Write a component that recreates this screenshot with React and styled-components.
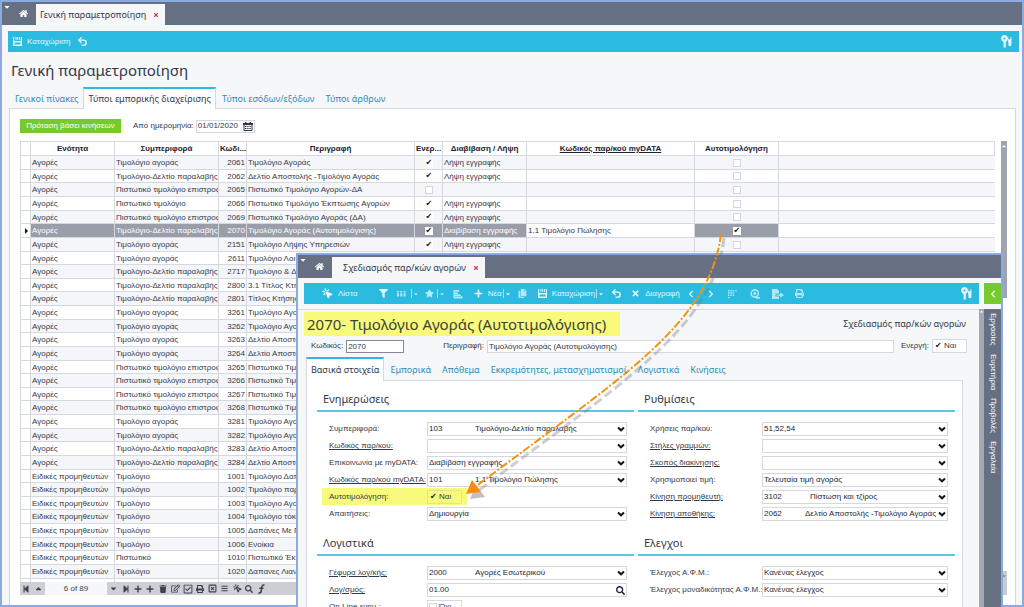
import { useState } from "react";
import styled, { createGlobalStyle, css } from "styled-components";
import { FaHome, FaFilter, FaStar, FaPlus, FaCopy, FaTimes, FaPrint, FaTrash, FaRegEdit, FaRegCheckSquare, FaSearch, FaBars, FaStepBackward, FaStepForward, FaCaretUp, FaCaretDown, FaChevronLeft, FaChevronRight } from "react-icons/fa";
import { Undo2, MousePointerClick, SquareX } from "lucide-react";

const colors = {
    frame: '#8aaae0',
    bar: '#677083',
    cyan: '#2bbbe1',
    green: '#77ca2b',
    page: '#f5f7f9',
    line: '#d5d8de',
    selected: '#9a9ea9',
    link: '#2d8db8',
    text: '#33384a',
    mark: '#f8fa7c',
}

const GlobalStyle = createGlobalStyle`
    * {
        box-sizing: border-box;
    }
    body {
        margin: 0;
        background-color: ${colors.page};
        color: ${colors.text};
        font-family: "Liberation Sans", sans-serif;
        font-size: 8px;
        line-height: 12px;
    }
    button, input, select {
        margin: 0;
        padding: 0;
        border: 0;
        border-radius: 0;
        background: none;
        color: inherit;
        font: inherit;
    }
    h1, h2, p {
        margin: 0;
        font-weight: normal;
    }
    svg {
        display: block;
        flex: none;
    }
`
const Desktop = styled.div`
    position: relative;
    height: 100vh;
    overflow: hidden;
`
const MainWindow = styled.main`
    display: flex;
    flex-direction: column;
    height: 100%;
    border: 2px solid ${colors.frame};
`
const FloatingWindow = styled.section`
    position: absolute;
    left: 296px;
    right: 21px;
    top: 253px;
    bottom: 0;
    display: flex;
    flex-direction: column;
    overflow: hidden;
    border: 2px solid ${colors.frame};
    border-bottom: 0;
    background-color: ${colors.page};
`
const TitleBar = styled.header`
    flex: none;
    display: flex;
    height: 23px;
    background-color: ${colors.bar};
    color: #fff;
`
const MenuArrow = styled.button`
    width: 9px;
    height: 9px;
    display: flex;
    align-items: center;
    justify-content: center;
`
const HomeButton = styled.button`
    width: 25px;
    display: flex;
    align-items: center;
    justify-content: center;
`
const WindowTab = styled.div`
    display: flex;
    align-items: center;
    gap: 7px;
    margin-top: 2px;
    padding: 0 6px 0 ${props => props.$indent}px;
    background-color: ${colors.page};
    color: ${colors.text};
    font-family: "Noto Sans", sans-serif;
    font-size: 9px;
`
const CloseButton = styled.button`
    color: #e0293b;
`
const Toolbar = styled.div`
    flex: ${props => props.$fill ? 1 : 'none'};
    display: flex;
    align-items: center;
    gap: 3px;
    height: 21px;
    margin: ${props => props.$margin || 0};
    padding: 0 7px 0 ${props => props.$indent}px;
    background-color: ${colors.cyan};
    color: #fff;
`
const ToolButton = styled.button`
    display: flex;
    align-items: center;
    gap: ${props => props.$gap || 5}px;
    margin-left: ${props => props.$space || 0}px;
    color: #e4f7fc;
    white-space: nowrap;
    svg {
        opacity: ${props => props.$faint ? 0.75 : 1};
    }
    &:last-child {
        margin-left: auto;
    }
`
const Split = styled.span`
    display: flex;
    align-items: center;
    gap: 1px;
    height: 9px;
    margin-left: ${props => props.$tight ? -4 : 0}px;
    padding-left: 1px;
    border-left: 1px solid #a5e1f2;
`
const PageTitle = styled.h1`
    flex: none;
    margin: 8px 0 7px 9px;
    font-family: "Noto Sans", sans-serif;
    font-size: 15px;
    line-height: 20px;
`
const TabList = styled.nav`
    position: relative;
    z-index: 1;
    flex: none;
    display: flex;
    align-items: stretch;
    margin-bottom: -1px;
    margin-left: ${props => props.$indent}px;
`
const Tab = styled.button`
    height: ${props => props.$tall ? 24 : 22}px;
    padding: 0 5px 0 6px;
    border-top: 2px solid transparent;
    color: ${colors.link};
    font-family: "Noto Sans", sans-serif;
    font-size: 9px;
    white-space: nowrap;
    ${props => props.$active && css`
        padding: 0 4px;
        border-top-color: ${colors.cyan};
        border-left: 1px solid ${colors.line};
        border-right: 1px solid ${colors.line};
        background-color: #fff;
        color: ${colors.text};
    `}
`
const Panel = styled.div`
    flex: 1;
    min-height: 0;
    display: flex;
    flex-direction: column;
    margin: 0 6px 0 7px;
    padding: 10px 8px 10px 10px;
    border: 1px solid ${colors.line};
    border-bottom: 0;
    background-color: #fff;
`
const FilterBar = styled.div`
    flex: none;
    display: flex;
    align-items: center;
    height: 14px;
    margin-bottom: 8px;
    label {
        margin: 0 2px 0 12px;
    }
`
const GreenButton = styled.button`
    width: 101px;
    height: 14px;
    background-color: ${colors.green};
    color: #fff;
`
const DateField = styled.div`
    display: flex;
    align-items: center;
    width: 59px;
    height: 13px;
    padding: 0 1px;
    border: 1px solid ${colors.line};
    input {
        flex: 1;
        min-width: 0;
    }
`
const GridArea = styled.div`
    flex: 1;
    min-height: 0;
    display: flex;
    gap: 6px;
`
const GridColumn = styled.div`
    flex: 1;
    min-width: 0;
    display: flex;
    flex-direction: column;
`
const GridClip = styled.div`
    flex: 1;
    min-height: 0;
    overflow: hidden;
    border-top: 1px solid ${colors.line};
    border-left: 1px solid ${colors.line};
`
const Grid = styled.table`
    width: 100%;
    table-layout: fixed;
    border-collapse: separate;
    border-spacing: 0;
    th, td {
        height: 14px;
        padding: 0 1px;
        border-right: 1px solid ${colors.line};
        border-bottom: 1px solid ${colors.line};
        overflow: hidden;
        white-space: nowrap;
        text-align: left;
        line-height: 12px;
    }
    th {
        color: #1d2130;
        text-align: center;
    }
    td:last-child {
        border-right: 0;
    }
    tbody tr:nth-child(8n + 2) td,
    tbody tr:nth-child(8n + 5) td,
    tbody tr:nth-child(8n + 8) td {
        height: 13px;
        line-height: 11px;
    }
    tbody tr:nth-child(odd) td:not(:first-child) {
        background-color: #f4f6f9;
    }
`
const Row = styled.tr`
    ${props => props.$selected && css`
        td:nth-child(n + 2):nth-child(-n + 7),
        td:nth-child(9) {
            background-color: ${colors.selected};
            color: #fff;
        }
        td:first-child {
            padding-left: 4px;
        }
    `}
`
const NumberCell = styled.td`
    && {
        text-align: right;
    }
`
const CheckCell = styled.td`
    && {
        text-align: center;
    }
`
const Check = styled.input`
    appearance: none;
    display: block;
    flex: none;
    width: 8px;
    height: 8px;
    margin: 0 auto;
    border: 1px solid ${props => props.$bare ? 'transparent' : '#d3d6dc'};
    background-color: ${props => props.$bare ? 'transparent' : '#fff'};
    &:checked {
        border-color: transparent;
    }
    &:checked::after {
        content: "✔";
        display: block;
        margin: -2px 0 0;
        color: #15171e;
        font-family: "DejaVu Sans", sans-serif;
        font-size: 8px;
        line-height: 10px;
    }
`
const ScrollTrack = styled.div`
    width: ${props => props.$width}px;
    display: flex;
    flex-direction: column;
    justify-content: space-between;
    background-color: ${props => props.$filled ? '#a5a9b4' : 'transparent'};
    color: #fff;
`
const ScrollThumb = styled.div`
    height: ${props => props.$height}px;
    padding-top: 2px;
    background-color: ${props => props.$light ? '#c9cbd0' : '#a0a4ae'};
    color: ${props => props.$light ? '#888c96' : '#fff'};
`
const Navigator = styled.div`
    flex: none;
    display: flex;
    align-items: center;
    height: 13px;
    background-color: #cdcfd4;
    color: #3b4254;
`
const NavButtons = styled.div`
    display: flex;
    width: ${props => props.$width}px;
    button {
        flex: 1;
        display: flex;
        align-items: center;
        justify-content: center;
    }
`
const Position = styled.p`
    width: 62px;
    background-color: #f5f7f9;
    line-height: 13px;
    text-align: center;
`
const ToolRow = styled.div`
    flex: none;
    display: flex;
    gap: 5px;
    margin: 5px 0 5px 6px;
`
const ExpandButton = styled.button`
    width: 17px;
    height: 21px;
    display: flex;
    align-items: center;
    justify-content: center;
    background-color: ${colors.green};
    color: #fff;
`
const WindowBody = styled.div`
    flex: 1;
    min-height: 0;
    display: flex;
`
const Form = styled.form`
    flex: 1;
    min-width: 0;
    display: flex;
    flex-direction: column;
    border-top: 1px solid ${colors.line};
`
const FormHeader = styled.div`
    flex: none;
    display: flex;
    align-items: center;
    justify-content: space-between;
    margin: 2px 13px 3px 6px;
    font-family: "Noto Sans", sans-serif;
    font-size: 9px;
`
const MarkedTitle = styled.h1`
    padding: 0 14px 0 3px;
    background-color: ${colors.mark};
    color: #3e4238;
    font-size: 15px;
    line-height: 24px;
`
const KeyRow = styled.div`
    flex: none;
    display: flex;
    align-items: center;
    gap: 3px;
    margin: 0 12px 4px 13px;
`
const KeyLabel = styled.label`
    flex: none;
    margin-left: ${props => props.$space || 0}px;
`
const TextInput = styled.input`
    flex: ${props => props.$short ? '0 0 58px' : 1};
    min-width: 0;
    height: 13px;
    padding: 0 1px;
    border: 1px solid ${props => props.$short ? '#858995' : colors.line};
    background-color: #fff;
`
const CheckField = styled.label`
    flex: none;
    display: flex;
    align-items: center;
    gap: 2px;
    width: 35px;
    height: 14px;
    padding-left: 1px;
    border: 1px solid ${props => props.$marked ? '#e2e58a' : colors.line};
    background-color: ${props => props.$marked ? 'transparent' : '#fff'};
    input {
        margin: 0;
    }
`
const FormPanel = styled.div`
    flex: 1;
    min-height: 0;
    display: grid;
    grid-template-columns: repeat(2, minmax(0, 1fr));
    align-content: start;
    gap: 12px 4px;
    margin: 0 16px 0 8px;
    padding: 8px 7px 0 10px;
    border: 1px solid ${colors.line};
    border-bottom: 0;
    background-color: #fff;
`
const SectionTitle = styled.h2`
    height: 23px;
    padding-left: 6px;
    border-bottom: 2px solid #62c4e2;
    font-family: "Noto Sans", sans-serif;
    font-size: 11px;
    line-height: 20px;
`
const Fields = styled.div`
    display: flex;
    flex-direction: column;
    gap: 3px;
    padding: 10px 7px 0 0;
`
const FieldRow = styled.div`
    display: flex;
    align-items: center;
    ${props => props.$marked && css`
        align-self: flex-start;
        width: 145px;
        margin: -2px 0 -1px 5px;
        padding: 2px 0 1px;
        background-color: ${colors.mark};
    `}
`
const FieldLabel = styled.label`
    flex: none;
    width: ${props => props.$width}px;
    padding-left: 12px;
    margin-left: ${props => props.$marked ? -5 : 0}px;
    white-space: nowrap;
    text-decoration: ${props => props.$link ? 'underline' : 'none'};
`
const Combo = styled.div`
    position: relative;
    flex: 1;
    min-width: 0;
    display: flex;
    height: 14px;
    border: 1px solid ${colors.line};
    background-color: #fff;
    color: #23283a;
    input {
        width: ${props => props.$code ? 46 : 180}px;
        min-width: 0;
        padding-left: 1px;
    }
    select {
        flex: 1 0 auto;
        min-width: 0;
        padding: 0 10px 0 1px;
        appearance: none;
    }
    svg {
        position: absolute;
        right: 1px;
        top: 2px;
        pointer-events: none;
    }
`
const SideBar = styled.nav`
    width: 17px;
    display: flex;
    flex-direction: column;
    align-items: center;
    gap: 8px;
    padding-top: 4px;
    background-color: ${colors.bar};
`
const SideLink = styled.button`
    color: #fff;
    writing-mode: vertical-rl;
`
const Arrow = styled.svg`
    position: absolute;
    left: 0;
    top: 0;
    pointer-events: none;
`

const SaveIcon = () => (
    <svg width="9" height="9" viewBox="0 0 9 9" fill="currentColor">
        <path d="M0 0h1.200v4h6.600V0H9v9H0zM1.500 5.500v2h6v-2zM2.500 0h1v2.800h-1zM4.200 0h1v2.800h-1zM6 0h1v2.800H6z" fillRule="evenodd" />
    </svg>
)
const ToolsIcon = () => (
    <svg width="11" height="13" viewBox="0 0 11 13">
        <circle cx="3.500" cy="3.500" r="2.200" fill="none" stroke="currentColor" strokeWidth="2.400" />
        <path d="M2.600 6h2.200v6.500H2.600z" fill="currentColor" />
        <path d="M7.300 1.500v2.500l1 .6L9.500 4V1.500c1.100.9 1.300 2.900.9 3.900v4.400a1.500 1.500 0 0 1-3 0V7C6.600 6 6.400 2.600 7.300 1.500z" fill="currentColor" />
    </svg>
)
const CalendarIcon = () => (
    <svg width="10" height="9" viewBox="0 0 10 9">
        <path d="M1 2.500h8v6H1z" fill="none" stroke="#33384a" />
        <path d="M0 1h10v2H0zM2 0h1.500v2H2zM6.500 0H8v2H6.500z" fill="#33384a" />
        <path d="M2 4.500h6M2 6.500h6" stroke="#33384a" strokeDasharray="1.400 0.800" />
    </svg>
)
const ColumnsIcon = () => (
    <svg width="9" height="8" viewBox="0 0 9 8" fill="currentColor">
        <path d="M0 1h2v1.500H0zM3.300 1h2v1.500h-2zM6.600 1h2v1.500h-2zM0 3.200h2v3.300H0zM3.300 3.200h2v3.300h-2zM6.600 3.200h2v3.300h-2z" />
    </svg>
)
const ReportIcon = () => (
    <svg width="10" height="10" viewBox="0 0 10 10" fill="currentColor">
        <path d="M1 1h5v1.800H1zM1 3.400h4v1.600H1zM1 5.600h6v1.600H1zM1 7.800h8.500V9.600H1z" />
        <path d="M1 1v8M6.500 5.500L9 8" stroke="currentColor" />
    </svg>
)
const DotsIcon = () => (
    <svg width="9" height="10" viewBox="0 0 9 10" fill="currentColor">
        <path d="M0 1h1.500v1.500H0zM2.300 1h1.500v1.500H2.300zM4.600 1h1.500v1.500H4.600zM7.200 1h1.500v1.500H7.200zM0 3.300h1.500v1.500H0zM2.300 3.300h1.500v1.500H2.300zM4.600 3.300h1.500v1.500H4.600zM0 5.600h1.500v1.500H0zM2.300 5.600h1.500v1.500H2.300zM4.600 5.600h1.500v1.500H4.600zM0 8h1.500v1.300H0z" />
    </svg>
)
const LookupIcon = () => (
    <svg width="10" height="10" viewBox="0 0 10 10" fill="none" stroke="currentColor">
        <circle cx="4.800" cy="4.500" r="3.600" strokeWidth="1.600" />
        <circle cx="4.800" cy="4.500" r="0.800" strokeWidth="1.400" />
        <path d="M5.500 8.800H10" strokeWidth="1.600" />
    </svg>
)
const ExportIcon = () => (
    <svg width="12" height="10" viewBox="0 0 12 10" fill="currentColor">
        <path d="M0 0h5l2 2v2.500H3.500v3H7V10H0z" />
        <path d="M4.500 5.400h3.800V3.500L12 6.100 8.300 8.600V6.700H4.500z" />
    </svg>
)
const Chevron = () => (
    <svg width="8" height="8" viewBox="0 0 8 8" fill="none" stroke="#15171e" strokeWidth="2">
        <path d="M1 2.500L4 5.300l3-2.800" />
    </svg>
)
const FunctionIcon = () => (
    <svg width="9" height="10" viewBox="0 0 9 10" fill="none" stroke="currentColor" strokeWidth="1.600">
        <path d="M7.500 1.200C5.500.6 5 2 4.700 4L4.200 7C3.900 8.800 3 9.300 1.500 8.800M2.300 4.200h4.200" />
    </svg>
)
const RowMarker = () => (
    <svg width="3" height="6" viewBox="0 0 3 6"><path d="M0 0l3 3-3 3z" fill="#15171e" /></svg>
)

const P = 'Αγορές'
const E = 'Ειδικές προμηθευτών'
const TA = 'Τιμολόγιο αγοράς'
const TD = 'Τιμολόγιο-Δελτίο παραλαβής'
const PE = 'Πιστωτικό τιμολόγιο επιστροφής'
const L = 'Λήψη εγγραφής'
const rows = [
    [P, TA, 2061, 'Τιμολόγιο Αγοράς', true, L],
    [P, TD, 2062, 'Δελτίο Αποστολής -Τιμολόγιο Αγοράς', true, L],
    [P, PE, 2065, 'Πιστωτικό Τιμολόγιο Αγορών-ΔΑ', false, ''],
    [P, 'Πιστωτικό τιμολόγιο', 2066, 'Πιστωτικό Τιμολόγιο Έκπτωσης Αγορών', true, L],
    [P, PE, 2069, 'Πιστωτικό Τιμολόγιο Αγοράς (ΔΑ)', true, L],
    [P, TD, 2070, 'Τιμολόγιο Αγοράς (Αυτοτιμολόγισης)', true, 'Διαβίβαση εγγραφής', '1.1 Τιμολόγιο Πώλησης', true],
    [P, TA, 2151, 'Τιμολόγιο Λήψης Υπηρεσιών', true, L],
    [P, TA, 2611, 'Τιμολόγιο Λοιπών'],
    [P, TD, 2717, 'Τιμολόγιο & Δελτίο'],
    [P, TD, 2800, '3.1 Τίτλος Κτήσης'],
    [P, TD, 2801, 'Τίτλος Κτήσης'],
    [P, TA, 3261, 'Τιμολόγιο Αγοράς'],
    [P, TA, 3262, 'Τιμολόγιο Αγοράς'],
    [P, TA, 3263, 'Δελτίο Αποστολής'],
    [P, TA, 3264, 'Δελτίο Αποστολής'],
    [P, PE, 3265, 'Πιστωτικό Τιμολόγιο'],
    [P, PE, 3266, 'Πιστωτικό Τιμολόγιο'],
    [P, PE, 3267, 'Πιστωτικό Τιμολόγιο'],
    [P, PE, 3268, 'Πιστωτικό Τιμολόγιο'],
    [P, TA, 3281, 'Τιμολόγιο Αγοράς'],
    [P, TA, 3282, 'Τιμολόγιο Αγοράς'],
    [P, TD, 3283, 'Δελτίο Αποστολής'],
    [P, TD, 3284, 'Δελτίο Αποστολής'],
    [E, 'Τιμολόγιο', 1001, 'Τιμολόγιο Δαπανών'],
    [E, 'Τιμολόγιο', 1002, 'Τιμολόγιο παροχής'],
    [E, 'Τιμολόγιο', 1003, 'Τιμολόγιο Αγοράς'],
    [E, 'Τιμολόγιο', 1004, 'Τιμολόγιο τόκων'],
    [E, 'Τιμολόγιο', 1005, 'Δαπάνες Με Παρακράτηση'],
    [E, 'Τιμολόγιο', 1006, 'Ενοίκια'],
    [E, 'Πιστωτικό', 1010, 'Πιστωτικό Έκπτωσης'],
    [E, 'Τιμολόγιο', 1020, 'Δαπανες Λιανικής'],
    [E, 'Τιμολόγιο', 1021, 'Τιμολόγιο'],
]

const updates = [
    { id: 'behaviour', label: 'Συμπεριφορά:', code: '103', value: TD },
    { id: 'docCode', label: 'Κωδικός παρ/κού:', value: '', link: true },
    { id: 'mydata', label: 'Επικοινωνία με myDATA:', value: 'Διαβίβαση εγγραφής' },
    { id: 'mydataCode', label: 'Κωδικός παρ/κού myDATA:', code: '101', value: '1.1 Τιμολόγιο Πώλησης', link: true },
    { id: 'self', label: 'Αυτοτιμολόγηση:', check: 'Ναι', checked: true, marked: true },
    { id: 'requests', label: 'Απαιτήσεις:', value: 'Δημιουργία' },
]
const settings = [
    { id: 'uses', label: 'Χρήσεις παρ/κού:', value: '51,52,54' },
    { id: 'columns', label: 'Στήλες γραμμών:', value: '', link: true },
    { id: 'purpose', label: 'Σκοπός διακίνησης:', value: '', link: true },
    { id: 'price', label: 'Χρησιμοποιεί τιμή:', value: 'Τελευταία τιμή αγοράς' },
    { id: 'supplier', label: 'Κίνηση προμηθευτή:', code: '3102', value: 'Πίστωση και τζίρος', link: true },
    { id: 'stock', label: 'Κίνηση αποθήκης:', code: '2062', value: 'Δελτίο Αποστολής -Τιμολόγιο Αγοράς', link: true },
]
const accounting = [
    { id: 'bridge', label: 'Γέφυρα λογ/κής:', code: '2000', value: 'Αγορές Εσωτερικού', link: true },
    { id: 'account', label: 'Λογ/σμός:', search: '01.00', link: true },
    { id: 'online', label: 'On-Line ενημ.:', check: 'Όχι' },
]
const checks = [
    { id: 'afm', label: 'Έλεγχος Α.Φ.Μ.:', value: 'Κανένας έλεγχος' },
    { id: 'afmUnique', label: 'Έλεγχος μοναδικότητας Α.Φ.Μ.:', value: 'Κανένας έλεγχος' },
]

function Field ({ field, labelWidth }) {
    const { id, label, code, value, search, check, checked, link, marked } = field

    return (
        <FieldRow $marked={marked}>
            <FieldLabel htmlFor={id} $width={labelWidth} $link={link} $marked={marked}>{label}</FieldLabel>
            {check && (
                <CheckField $marked={marked}>
                    <Check id={id} type="checkbox" defaultChecked={checked} $bare={marked} />
                    {check}
                </CheckField>
            )}
            {search && (
                <Combo>
                    <input id={id} defaultValue={search} />
                    <FaSearch size={9} />
                </Combo>
            )}
            {value !== undefined && (
                <Combo $code={code}>
                    {code && <input aria-label={label} defaultValue={code} />}
                    <select id={id}><option>{value}</option></select>
                    <Chevron />
                </Combo>
            )}
        </FieldRow>
    )
}

function Section ({ title, fields, labelWidth }) {
    return (
        <section>
            <SectionTitle>{title}</SectionTitle>
            <Fields>
                {fields.map(field => <Field key={field.id} field={field} labelWidth={labelWidth} />)}
            </Fields>
        </section>
    )
}

function WindowTitle ({ title, indent }) {
    return (
        <TitleBar>
            <MenuArrow aria-label="Μενού"><FaCaretDown size={8} /></MenuArrow>
            <HomeButton aria-label="Αρχική"><FaHome size={9} /></HomeButton>
            <WindowTab $indent={indent}>
                {title}
                <CloseButton aria-label="Κλείσιμο"><FaTimes size={6} /></CloseButton>
            </WindowTab>
        </TitleBar>
    )
}

function Tabs ({ items, active, onSelect, indent, tall }) {
    return (
        <TabList $indent={indent}>
            {items.map(item => (
                <Tab key={item} type="button" $tall={tall} $active={item === active} onClick={() => onSelect(item)}>{item}</Tab>
            ))}
        </TabList>
    )
}

function DocTypesGrid () {
    return (
        <Grid>
            <colgroup>
                <col width="10" /><col width="84" /><col width="104" /><col width="28" /><col width="168" />
                <col width="28" /><col width="84" /><col width="168" /><col width="84" /><col />
            </colgroup>
            <thead>
                <tr>
                    <th></th><th>Ενότητα</th><th>Συμπεριφορά</th><th>Κωδι...</th><th>Περιγραφή</th>
                    <th>Ενερ...</th><th>Διαβίβαση / Λήψη</th><th><u>Κωδικός παρ/κού myDATA</u></th><th>Αυτοτιμολόγηση</th><th></th>
                </tr>
            </thead>
            <tbody>
                {rows.map(([unit, kind, code, name, enabled, transfer, mydata, self]) => (
                    <Row key={code} $selected={code === 2070}>
                        <td>{code === 2070 && <RowMarker />}</td>
                        <td>{unit}</td>
                        <td>{kind}</td>
                        <NumberCell>{code}</NumberCell>
                        <td>{name}</td>
                        <CheckCell><Check type="checkbox" aria-label="Ενεργή" defaultChecked={enabled} /></CheckCell>
                        <td>{transfer}</td>
                        <td>{mydata}</td>
                        <CheckCell><Check type="checkbox" aria-label="Αυτοτιμολόγηση" defaultChecked={self} /></CheckCell>
                        <td></td>
                    </Row>
                ))}
            </tbody>
        </Grid>
    )
}

function GridNavigator () {
    return (
        <Navigator>
            <NavButtons $width={25}>
                <button aria-label="Πρώτη"><FaStepBackward size={8} /></button>
                <button aria-label="Προηγούμενη"><FaCaretUp size={9} /></button>
            </NavButtons>
            <Position>6 of 89</Position>
            <NavButtons $width={161}>
                <button aria-label="Επόμενη"><FaCaretDown size={9} /></button>
                <button aria-label="Τελευταία"><FaStepForward size={8} /></button>
                <button aria-label="Εισαγωγή"><FaPlus size={8} /></button>
                <button aria-label="Προσθήκη"><FaPlus size={8} /></button>
                <button aria-label="Διαγραφή"><FaTrash size={8} /></button>
                <button aria-label="Επεξεργασία"><FaRegEdit size={9} /></button>
                <button aria-label="Επιλογή"><FaRegCheckSquare size={10} /></button>
                <button aria-label="Εκτύπωση"><FaPrint size={8} /></button>
                <button aria-label="Εξαγωγή"><SquareX size={9} strokeWidth={3} /></button>
                <button aria-label="Λίστα"><FaBars size={7} /></button>
                <button aria-label="Δείκτης"><MousePointerClick size={9} strokeWidth={3} /></button>
                <button aria-label="Αναζήτηση"><FaSearch size={8} /></button>
                <button aria-label="Συνάρτηση"><FunctionIcon /></button>
            </NavButtons>
        </Navigator>
    )
}

function DesignWindow () {
    const [tab, setTab] = useState('Βασικά στοιχεία')

    return (
        <FloatingWindow>
            <WindowTitle title="Σχεδιασμός παρ/κών αγορών" indent={11} />
            <ToolRow>
                <Toolbar $fill $indent={18}>
                    <ToolButton><MousePointerClick size={11} strokeWidth={3} fill="currentColor" />Λίστα</ToolButton>
                    <ToolButton $space={18} aria-label="Φίλτρο"><FaFilter size={9} /></ToolButton>
                    <ToolButton $faint $space={6} aria-label="Στήλες"><ColumnsIcon /><Split><FaCaretDown size={6} /></Split></ToolButton>
                    <ToolButton $faint $space={3} $gap={3} aria-label="Αγαπημένα"><FaStar size={9} /><Split><FaCaretDown size={6} /></Split></ToolButton>
                    <ToolButton $faint $space={5} aria-label="Αναφορά"><ReportIcon /></ToolButton>
                    <ToolButton $space={8}><FaPlus size={9} />Νέα<Split $tight><FaCaretDown size={6} /></Split></ToolButton>
                    <ToolButton $faint $space={4} aria-label="Αντιγραφή"><FaCopy size={9} /></ToolButton>
                    <ToolButton $space={8}><SaveIcon />Καταχώριση<Split $tight><FaCaretDown size={6} /></Split></ToolButton>
                    <ToolButton $space={4} aria-label="Αναίρεση"><Undo2 size={11} strokeWidth={3} /></ToolButton>
                    <ToolButton $space={6}><FaTimes size={9} />Διαγραφή</ToolButton>
                    <ToolButton $space={4} aria-label="Προηγούμενο"><FaChevronLeft size={8} /></ToolButton>
                    <ToolButton $space={9} aria-label="Επόμενο"><FaChevronRight size={8} /></ToolButton>
                    <ToolButton $faint $space={10} aria-label="Προβολή"><DotsIcon /></ToolButton>
                    <ToolButton $faint $space={10} aria-label="Εύρεση"><LookupIcon /></ToolButton>
                    <ToolButton $faint $space={9} aria-label="Εξαγωγή"><ExportIcon /></ToolButton>
                    <ToolButton $faint $space={8} aria-label="Εκτύπωση"><FaPrint size={9} /></ToolButton>
                    <ToolButton aria-label="Ρυθμίσεις"><ToolsIcon /></ToolButton>
                </Toolbar>
                <ExpandButton aria-label="Ανάπτυξη"><FaChevronLeft size={8} /></ExpandButton>
            </ToolRow>
            <WindowBody>
                <Form>
                    <FormHeader>
                        <MarkedTitle>2070- Τιμολόγιο Αγοράς (Αυτοτιμολόγισης)</MarkedTitle>
                        <p>Σχεδιασμός παρ/κών αγορών</p>
                    </FormHeader>
                    <KeyRow>
                        <KeyLabel htmlFor="code">Κωδικός:</KeyLabel>
                        <TextInput id="code" $short defaultValue="2070" />
                        <KeyLabel htmlFor="description" $space={36}>Περιγραφή:</KeyLabel>
                        <TextInput id="description" defaultValue="Τιμολόγιο Αγοράς (Αυτοτιμολόγισης)" />
                        <KeyLabel htmlFor="active" $space={4}>Ενεργή:</KeyLabel>
                        <CheckField><Check id="active" type="checkbox" defaultChecked />Ναι</CheckField>
                    </KeyRow>
                    <Tabs
                        items={['Βασικά στοιχεία', 'Εμπορικά', 'Απόθεμα', 'Εκκρεμότητες, μετασχηματισμοί', 'Λογιστικά', 'Κινήσεις']}
                        active={tab}
                        onSelect={setTab}
                        indent={8}
                        tall
                    />
                    <FormPanel>
                        <Section title="Ενημερώσεις" fields={updates} labelWidth={110} />
                        <Section title="Ρυθμίσεις" fields={settings} labelWidth={124} />
                        <Section title="Λογιστικά" fields={accounting} labelWidth={110} />
                        <Section title="Ελεγχοι" fields={checks} labelWidth={124} />
                    </FormPanel>
                </Form>
                <ScrollTrack $width={5} $filled><FaCaretUp size={5} /></ScrollTrack>
                <SideBar>
                    <SideLink>Εργασίες</SideLink>
                    <SideLink>Ευρετήρια</SideLink>
                    <SideLink>Προβολές</SideLink>
                    <SideLink>Εργαλεία</SideLink>
                </SideBar>
            </WindowBody>
        </FloatingWindow>
    )
}

function App () {
    const [tab, setTab] = useState('Τύποι εμπορικής διαχείρισης')

    return (
        <Desktop>
            <GlobalStyle />
            <MainWindow>
                <WindowTitle title="Γενική παραμετροποίηση" indent={4} />
                <Toolbar $indent={5} $margin="6px 3px 0 6px">
                    <ToolButton><SaveIcon />Καταχώριση</ToolButton>
                    <ToolButton $space={4} aria-label="Αναίρεση"><Undo2 size={11} strokeWidth={3} /></ToolButton>
                    <ToolButton aria-label="Ρυθμίσεις"><ToolsIcon /></ToolButton>
                </Toolbar>
                <PageTitle>Γενική παραμετροποίηση</PageTitle>
                <Tabs
                    items={['Γενικοί πίνακες', 'Τύποι εμπορικής διαχείρισης', 'Τύποι εσόδων/εξόδων', 'Τύποι άρθρων']}
                    active={tab}
                    onSelect={setTab}
                    indent={7}
                />
                <Panel>
                    <FilterBar>
                        <GreenButton>Πρόταση βάσει κινήσεων</GreenButton>
                        <label htmlFor="fromDate">Από ημερομηνία:</label>
                        <DateField>
                            <input id="fromDate" defaultValue="01/01/2020" />
                            <CalendarIcon />
                        </DateField>
                    </FilterBar>
                    <GridArea>
                        <GridColumn>
                            <GridClip><DocTypesGrid /></GridClip>
                            <GridNavigator />
                        </GridColumn>
                        <ScrollTrack $width={6}>
                            <ScrollThumb $height={157}><FaCaretUp size={6} /></ScrollThumb>
                            <ScrollThumb $height={24} $light><FaCaretDown size={6} /></ScrollThumb>
                        </ScrollTrack>
                    </GridArea>
                </Panel>
            </MainWindow>
            <DesignWindow />
            <Arrow width="800" height="520" viewBox="0 0 800 520" fill="none" aria-hidden="true">
                <path d="M724 238C713 329 620 384 478 491" stroke="#70757f" strokeOpacity="0.35" strokeWidth="3" strokeDasharray="9 4" />
                <path d="M470 499l6-14 9 12z" fill="#70757f" fillOpacity="0.45" />
                <path d="M721 234C710 325 617 380 475 487" stroke="#ef950f" strokeWidth="2" strokeDasharray="8 2 2 2" />
                <path d="M466 494l6-14 9 12z" fill="#fb8a14" />
            </Arrow>
        </Desktop>
    )
}

export default App
